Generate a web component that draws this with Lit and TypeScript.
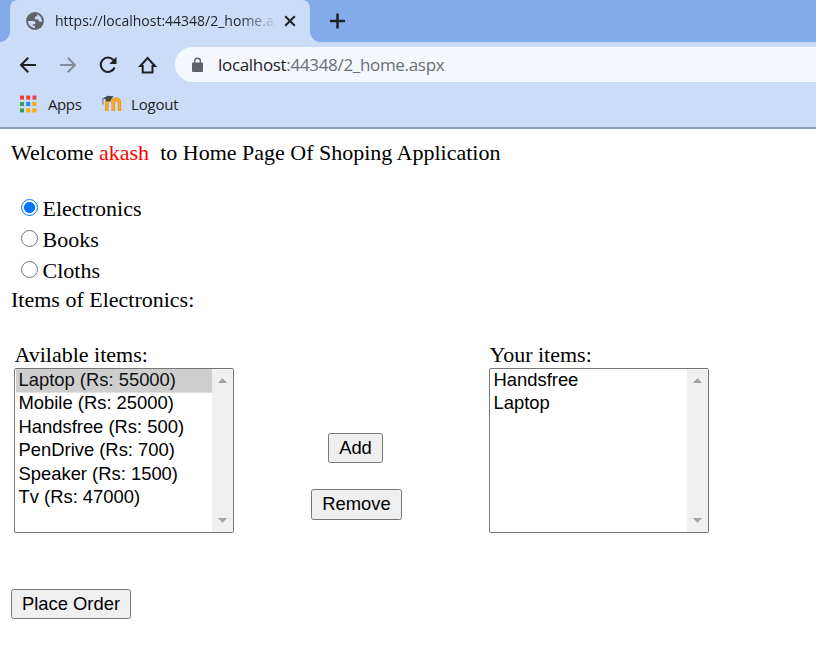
import { LitElement, html, css, svg } from "lit";
import { customElement, property } from "lit/decorators.js";
import { classMap } from "lit/directives/class-map.js";

@customElement("browser-chrome")
class BrowserChrome extends LitElement {
  static styles = css`
    :host { display: block; font-family: "Open Sans", "Noto Sans", sans-serif; color: #1f2227; background: #cbdcf6; height: 127px; border-bottom: 2px solid #8d9bb1; overflow: hidden; }
    svg { display: block; flex: none; }
    .strip { height: 42px; background: #84abe9; display: flex; }
    .tab { box-sizing: border-box; width: 300px; margin-left: 10px; height: 42px; background: #cbdcf6; border-radius: 8px 8px 0 0; display: flex; align-items: center; padding-left: 16px; position: relative; }
    .tab::before, .tab::after { content: ""; position: absolute; bottom: 0; width: 10px; height: 10px; }
    .tab::before { left: -10px; background: radial-gradient(circle at 0 0, #84abe9 9.5px, #cbdcf6 10px); }
    .tab::after { right: -10px; background: radial-gradient(circle at 100% 0, #84abe9 9.5px, #cbdcf6 10px); }
    .title { width: 220px; margin-left: 11px; font-size: 14px; line-height: 20px; white-space: nowrap; overflow: hidden; letter-spacing: 0; -webkit-mask-image: linear-gradient(90deg, #000 185px, transparent 222px); }
    .close { margin-left: 9px; }
    .plus { margin: 13px 0 0 20px; }
    .nav { height: 45px; display: flex; align-items: center; }
    .back { margin-left: 18px; }
    .fwd, .reload, .home { margin-left: 20px; }
    .omni { margin-left: 17px; flex: 1; height: 35px; background: #f4f8fe; border-radius: 17.5px 0 0 17.5px; display: flex; align-items: center; }
    .lock { margin-left: 15px; }
    .url { margin-left: 14px; font-size: 17px; line-height: 24px; color: #6b6f75; letter-spacing: -0.32px; white-space: nowrap; }
    .host { color: #1f2227; }
    .marks { height: 34px; display: flex; align-items: center; font-size: 15px; line-height: 20px; }
    .grid { margin-left: 19px; }
    .apps { margin-left: 11px; width: 54px; letter-spacing: -0.4px; }
    .out { margin-left: 9px; letter-spacing: -0.2px; }
  `;
  render() {
    const colors = ["#ea4335", "#ea4335", "#ea4335", "#34a35a", "#2787f5", "#f9ab00", "#34a35a", "#f9ab00", "#f9ab00"];
    return html`
      <div class="strip">
        <div class="tab">
          <svg width="18" height="18" viewBox="0 0 18 18"><circle cx="9" cy="9" r="8.900" fill="#5f6368"/><path fill="#cbdcf6" d="M2.100 9H7c2 0 2.500 1 2.500 2s-.8 1.300-1.500 1.300H6.800v1.500H9v2.100C5.200 15.900 2.100 12.800 2.100 9ZM10.700 2.300c3 .8 5.200 3.500 5.200 6.700l-.1.800h-1.500c-1 0-1.600-.7-1.600-1.600V7.500h-2.300c-.9 0-1.600-.7-1.600-1.500s.7-1.500 1.500-1.500.9-.7.900-1.200Z"/></svg>
          <div class="title">https://localhost:44348/2_home.aspx</div>
          <svg class="close" width="12" height="12" viewBox="0 0 12 12"><path d="m1.200 1.200 9.600 9.600m0-9.600-9.600 9.600" stroke="#202124" stroke-width="2"/></svg>
        </div>
        <svg class="plus" width="16" height="16" viewBox="0 0 16 16"><path d="M7.500 .5v15M0 8h15" stroke="#202124" stroke-width="2.500"/></svg>
      </div>
      <div class="nav">
        <svg class="back" width="20" height="20" viewBox="0 0 20 20"><path d="M18 10H3m7.200-7.200L3 10l7.200 7.200" fill="none" stroke="#202124" stroke-width="2"/></svg>
        <svg class="fwd" width="20" height="20" viewBox="0 0 20 20"><path d="M2 10h15M9.800 2.800 17 10l-7.200 7.200" fill="none" stroke="#838b99" stroke-width="2"/></svg>
        <svg class="reload" width="20" height="20" viewBox="0 0 20 20"><path d="M16.600 12.500A7.200 7.200 0 1 1 15.400 5" fill="none" stroke="#202124" stroke-width="2.100"/><path d="M18.500 1.800V9h-7.200Z" fill="#202124"/></svg>
        <svg class="home" width="20" height="20" viewBox="0 0 20 20"><path d="M2.200 11H4.700v6.500h9.800V11h2.500L9.600 3Z" fill="none" stroke="#202124" stroke-width="2"/></svg>
        <div class="omni">
          <svg class="lock" width="14" height="16" viewBox="0 0 14 16"><rect x="2" y="5.500" width="11" height="9.500" rx="1" fill="#5f6368"/><path d="M4.700 6V4a2.800 2.800 0 0 1 5.600 0v2" fill="none" stroke="#5f6368" stroke-width="1.400"/></svg>
          <div class="url"><span class="host">localhost</span>:44348/2_home.aspx</div>
        </div>
      </div>
      <div class="marks">
        <svg class="grid" width="18" height="18" viewBox="0 0 18 18">${colors.map((c, i) => svg`<rect x=${1 + (i % 3) * 6.200} y=${0.6 + Math.floor(i / 3) * 6.400} width="4" height="4" fill=${c}/>`)}</svg>
        <span class="apps">Apps</span>
        <svg class="logo" width="20" height="18" viewBox="0 0 20 18"><path d="M4.800 16V8.500Q4.800 4.800 8 4.800T11.200 8.500V16M11.200 8.500Q11.200 4.300 14.300 4.300T17.500 8.500V16" fill="none" stroke="#e2901c" stroke-width="3.400"/><path d="M4.800 15.700V8.500Q4.800 4.800 8 4.800T11.200 8.500v7.200M11.200 8.500Q11.200 4.300 14.300 4.300T17.500 8.500v7.200" fill="none" stroke="#ffac28" stroke-width="1.900"/><path d="M.3 3.500 6 .8l5.500.4L9 4.500 8.200 6.500 4 6.300 3.300 4Z" fill="#4a4845"/><path d="m.8 3.500.2 6" stroke="#77716b"/></svg>
        <span class="out">Logout</span>
      </div>`;
  }
}

@customElement("item-list")
class ItemList extends LitElement {
  @property({ attribute: false }) items: string[] = [];
  @property({ type: Number }) selected = -1;
  static styles = css`
    :host { box-sizing: border-box; display: flex; width: 220px; height: 165px; border: 1px solid #767676; border-radius: 2px; background: #fff; font: 18.4px/23.4px "Liberation Sans", Arial, sans-serif; }
    .rows { flex: 1; margin-left: 1px; }
    .row { box-sizing: border-box; height: 23.4px; padding-left: 2.500px; white-space: nowrap; line-height: 22.9px; }
    .sel { background: #cecece; color: #101010; box-shadow: 0 0.6px #cecece; }
    .bar { width: 21px; background: #f0f0f0; display: flex; flex-direction: column; justify-content: space-between; align-items: center; padding: 9px 0; box-sizing: border-box; }
    svg { display: block; }
  `;
  render() {
    return html`
      <div class="rows">${this.items.map((t, i) => html`<div class=${classMap({ row: true, sel: i === this.selected })}>${t}</div>`)}</div>
      <div class="bar">
        <svg width="9" height="5"><path d="M0 5 4.500 0 9 5Z" fill="#a3a3a3"/></svg>
        <svg width="9" height="5"><path d="M0 0 4.500 5 9 0Z" fill="#a3a3a3"/></svg>
      </div>`;
  }
}

@customElement("app-root")
class AppRoot extends LitElement {
  static styles = css`
    :host { display: block; width: 816px; height: 651px; overflow: hidden; background: #fff; color: #000; font: 22px/26px "Liberation Serif", "Times New Roman", serif; }
    .page { padding: 11px 0 0 11px; }
    .line { height: 26px; white-space: pre; }
    .user { color: #f00; }
    .options { margin-top: 28px; }
    .option { box-sizing: border-box; height: 31px; display: flex; align-items: center; padding: 0 0 2px 10px; }
    .dot { box-sizing: border-box; width: 17px; height: 17px; border: 1px solid #767676; border-radius: 50%; margin: 0 4.500px 2px 0; }
    .on { border: 1.500px solid #0075ff; background: radial-gradient(circle, #0075ff 5.200px, #fff 5.800px); }
    .cols { display: flex; margin-top: 29px; padding-left: 3px; }
    .label { padding-left: 0.500px; }
    .mid { width: 255px; display: flex; flex-direction: column; align-items: center; padding-top: 91px; gap: 26px; }
    .mid .btn { position: relative; left: -5px; }
    .btn { box-sizing: border-box; height: 30px; padding: 0; border: 1px solid #767676; border-radius: 2.500px; background: #efefef; color: #000; font: 18.400px/22px "Liberation Sans", Arial, sans-serif; white-space: nowrap; }
    .mid .add { width: 55px; left: -6px; }
    .remove { width: 91px; height: 31px; padding-bottom: 1px; }
    .order { display: block; width: 120px; margin-top: 56px; }
  `;
  render() {
    return html`
      <browser-chrome></browser-chrome>
      <div class="page">
        <div class="line">Welcome <span class="user">akash</span>  to Home Page Of Shoping Application</div>
        <div class="options">
          ${["Electronics", "Books", "Cloths"].map((t, i) => html`<div class="option"><span class=${classMap({ dot: true, on: i === 0 })}></span>${t}</div>`)}
        </div>
        <div class="line">Items of Electronics:</div>
        <div class="cols">
          <div>
            <div class="line label">Avilable items:</div>
            <item-list .selected=${0} .items=${["Laptop (Rs: 55000)", "Mobile (Rs: 25000)", "Handsfree (Rs: 500)", "PenDrive (Rs: 700)", "Speaker (Rs: 1500)", "Tv (Rs: 47000)"]}></item-list>
          </div>
          <div class="mid"><button class="btn add">Add</button><button class="btn remove">Remove</button></div>
          <div>
            <div class="line label">Your items:</div>
            <item-list .items=${["Handsfree", "Laptop"]}></item-list>
          </div>
        </div>
        <button class="btn order">Place Order</button>
      </div>`;
  }
}
